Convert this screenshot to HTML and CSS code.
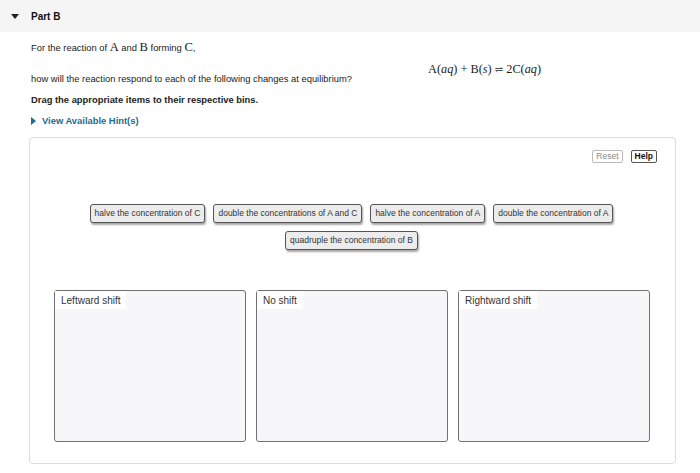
FILE: index.html
```html
<!DOCTYPE html>
<html>
<head>
<meta charset="utf-8">
<link rel="stylesheet" href="styles.css">
</head>
<body>
<div class="header">
  <svg class="caret" width="8" height="5" viewBox="0 0 8 5"><path d="M0 0H8L4 5Z" fill="#222"/></svg>
  <span class="title">Part B</span>
</div>
<div class="content">
  <p class="intro">For the reaction of <span class="m">A</span> and <span class="m">B</span> forming <span class="m">C</span>,</p>
  <div class="eq"><span class="m">A</span>(<i>aq</i>) + <span class="m">B</span>(<i>s</i>) <span class="harp">⇌</span> 2<span class="m">C</span>(<i>aq</i>)</div>
  <p class="q">how will the reaction respond to each of the following changes at equilibrium?</p>
  <p class="drag">Drag the appropriate items to their respective bins.</p>
  <p class="hint"><svg class="hcaret" width="5" height="8" viewBox="0 0 5 8"><path d="M0 0V8L5 4Z" fill="#1b6d8e"/></svg>View Available Hint(s)</p>
  <div class="box">
    <div class="tools">
      <span class="btn reset">Reset</span>
      <span class="btn help">Help</span>
    </div>
    <div class="items">
      <div class="row">
        <span class="chip">halve the concentration of C</span>
        <span class="chip">double the concentrations of A and C</span>
        <span class="chip">halve the concentration of A</span>
        <span class="chip">double the concentration of A</span>
      </div>
      <div class="row">
        <span class="chip">quadruple the concentration of B</span>
      </div>
    </div>
    <div class="bins">
      <div class="bin"><span class="label">Leftward shift</span></div>
      <div class="bin"><span class="label">No shift</span></div>
      <div class="bin"><span class="label">Rightward shift</span></div>
    </div>
  </div>
</div>
</body>
</html>
```
FILE: styles.css
```css
html, body {
  margin: 0;
  padding: 0;
  background: #fff;
  font-family: "Liberation Sans", Arial, sans-serif;
  color: #222;
}
.header {
  height: 32px;
  background: #f5f5f5;
  display: flex;
  align-items: center;
  padding-left: 11px;
}
.caret { display: block; }
.title {
  margin-left: 12px;
  font-weight: bold;
  font-size: 10px;
  color: #111;
}
.content {
  padding: 0 24px 0 29px;
}
p { margin: 0; }
.intro, .q, .drag, .hint {
  padding-left: 2px;
  font-size: 9.4px;
  line-height: 12px;
  height: 12px;
  white-space: nowrap;
}
.intro { margin-top: 9px; }
.m {
  font-family: "Liberation Serif", "DejaVu Serif", serif;
  font-size: 12.5px;
}
.eq {
  margin-top: 10px;
  height: 12px;
  line-height: 12px;
  padding-left: 399px;
  font-family: "Liberation Serif", "DejaVu Serif", serif;
  font-size: 12.3px;
  color: #222;
  white-space: nowrap;
}
.eq .m { font-size: 12.3px; }
.eq i { font-style: italic; }
.harp { font-family: "DejaVu Serif", serif; font-size: 10px; }
.q { margin-top: -2px; }
.drag { margin-top: 9px; font-weight: bold; }
.hint {
  margin-top: 9px;
  font-weight: bold;
  color: #1b6d8e;
  display: flex;
  align-items: center;
}
.hcaret { margin-right: 6px; }
.box {
  margin-top: 10px;
  border: 1px solid #dcdcdc;
  border-radius: 4px;
  padding: 12px 18px 21px 24px;
}
.tools {
  display: flex;
  justify-content: flex-end;
  gap: 8px;
}
.btn {
  height: 13px;
  box-sizing: border-box;
  font-size: 8.5px;
  line-height: 11px;
  padding: 0 3px;
  border-radius: 2px;
  background: #fff;
}
.reset { border: 1px solid #bbb; color: #888; }
.help { border: 1px solid #555; color: #111; font-weight: bold; }
.items {
  margin-top: 41px;
  display: flex;
  flex-direction: column;
  align-items: center;
  gap: 8px;
  margin-right: 8px;
}
.row {
  display: flex;
  gap: 8px;
}
.chip {
  height: 19px;
  box-sizing: border-box;
  border: 1px solid #555;
  border-radius: 3px;
  background: #ececec;
  box-shadow: 1px 2px 2px rgba(0,0,0,0.35);
  font-size: 8.5px;
  line-height: 17px;
  padding: 0 4px;
  color: #333;
  white-space: nowrap;
}
.bins {
  margin-top: 40px;
  display: grid;
  grid-template-columns: repeat(3, 192px);
  gap: 10px;
}
.bin {
  height: 152px;
  box-sizing: border-box;
  border: 1.5px solid #707070;
  border-radius: 3px;
  background: #f7f7f9;
  display: flex;
  align-items: flex-start;
}
.label {
  background: #fff;
  font-size: 10px;
  line-height: 12px;
  padding: 4px 6px 2px;
  color: #333;
}
```
